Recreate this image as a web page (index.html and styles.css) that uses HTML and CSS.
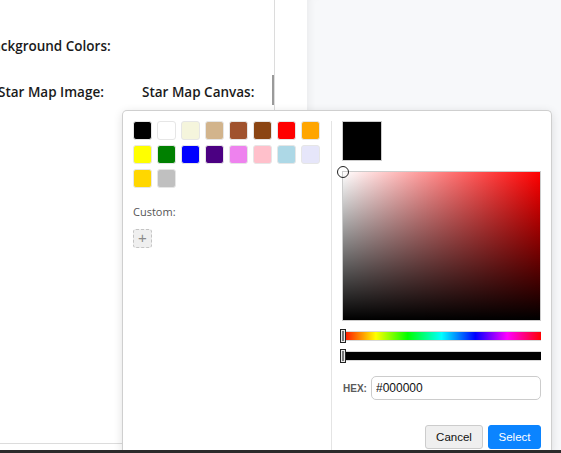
FILE: index.html
```html
<!DOCTYPE html>
<html>
<head>
<meta charset="utf-8">
<link rel="stylesheet" href="styles.css">
</head>
<body>
<div class="app">
  <div class="panel">
    <div class="panel-inner">
      <div class="label heading">Background Colors:</div>
      <div class="label-row">
        <div class="label">Star Map Image:</div>
        <div class="label">Star Map Canvas:</div>
      </div>
    </div>
    <div class="scroll-thumb"></div>
  </div>
  <div class="gutter"></div>
  <div class="canvas-area"></div>
</div>
<div class="taskbar"></div>

<div class="picker">
  <div class="palette">
    <div class="swatches">
      <span class="sw" style="background:#000000"></span>
      <span class="sw" style="background:#ffffff"></span>
      <span class="sw" style="background:#f5f5dc"></span>
      <span class="sw" style="background:#d2b48c"></span>
      <span class="sw" style="background:#a0522d"></span>
      <span class="sw" style="background:#8b4513"></span>
      <span class="sw" style="background:#ff0000"></span>
      <span class="sw" style="background:#ffa500"></span>
      <span class="sw" style="background:#ffff00"></span>
      <span class="sw" style="background:#008000"></span>
      <span class="sw" style="background:#0000ff"></span>
      <span class="sw" style="background:#4b0082"></span>
      <span class="sw" style="background:#ee82ee"></span>
      <span class="sw" style="background:#ffc0cb"></span>
      <span class="sw" style="background:#add8e6"></span>
      <span class="sw" style="background:#e6e6fa"></span>
      <span class="sw" style="background:#ffd700"></span>
      <span class="sw" style="background:#c0c0c0"></span>
    </div>
    <div class="custom-label">Custom:</div>
    <div class="add-btn">+</div>
  </div>
  <div class="editor">
    <div class="preview"></div>
    <div class="sat">
      <div class="sat-handle"></div>
    </div>
    <div class="bar hue"><div class="bar-handle"></div></div>
    <div class="bar alpha"><div class="bar-handle"></div></div>
    <div class="hex-row">
      <label class="hex-label">HEX:</label>
      <input class="hex-input" type="text" value="#000000">
    </div>
    <div class="actions">
      <button class="btn cancel">Cancel</button>
      <button class="btn select">Select</button>
    </div>
  </div>
</div>
</body>
</html>
```
FILE: styles.css
```css
html, body {
  margin: 0;
  padding: 0;
  height: 453px;
  overflow: hidden;
  background: #ffffff;
  font-family: "Open Sans", "Liberation Sans", sans-serif;
}

.app {
  display: flex;
  height: 450px;
}

.panel {
  position: relative;
  width: 274px;
  height: 443px;
  border-right: 1px solid #dcdcdc;
  border-bottom: 1px solid #dcdcdc;
  overflow: hidden;
  flex-shrink: 0;
}

.panel-inner {
  padding-top: 36px;
}

.label {
  font-size: 13.5px;
  font-weight: 600;
  line-height: 20px;
  color: #1a1a1a;
  white-space: nowrap;
}

.heading {
  margin-left: -16px;
}

.label-row {
  display: grid;
  grid-template-columns: 144px 1fr;
  margin-left: -2px;
  margin-top: 25.5px;
}

.scroll-thumb {
  position: absolute;
  right: 0;
  top: 75px;
  width: 2px;
  height: 30px;
  background: #9a9a9a;
}

.gutter {
  width: 32px;
  flex-shrink: 0;
}

.canvas-area {
  flex: 1;
  background: #f7f8fa;
  box-shadow: inset 8px 0 8px -6px rgba(0, 0, 0, 0.06);
}

.taskbar {
  position: relative;
  z-index: 5;
  height: 3px;
  background: #2b2b2b;
}

/* picker popup */
.picker {
  position: absolute;
  left: 122px;
  top: 110px;
  width: 430px;
  height: 343px;
  box-sizing: border-box;
  padding: 10px 10px 0 10px;
  display: flex;
  background: #ffffff;
  border: 1px solid #cfcfcf;
  border-bottom: none;
  border-radius: 5px 5px 0 0;
  box-shadow: 0 2px 10px rgba(0, 0, 0, 0.12);
  z-index: 2;
}

.palette {
  width: 188px;
  padding-right: 10px;
  border-right: 1px solid #e4e4e4;
  flex-shrink: 0;
}

.swatches {
  display: grid;
  grid-template-columns: repeat(8, 19px);
  grid-auto-rows: 19px;
  gap: 5px;
}

.sw {
  display: block;
  box-sizing: border-box;
  border: 1px solid #e6e6e6;
  border-radius: 3px;
}

.custom-label {
  margin-top: 16px;
  font-size: 11px;
  line-height: 15px;
  color: #555;
}

.add-btn {
  margin-top: 10px;
  width: 19px;
  height: 19px;
  box-sizing: border-box;
  border: 1px dashed #c4c4c4;
  border-radius: 3px;
  background: #efefef;
  color: #8a8a8a;
  font-family: "Liberation Sans", sans-serif;
  font-size: 15px;
  line-height: 16px;
  text-align: center;
}

.editor {
  width: 199px;
  padding-left: 10px;
  flex-shrink: 0;
}

.preview {
  width: 40px;
  height: 40px;
  box-sizing: border-box;
  border: 1px solid #cccccc;
  background: #000000;
}

.sat {
  position: relative;
  margin-top: 10px;
  height: 150px;
  box-sizing: border-box;
  border: 1px solid #cccccc;
  background:
    linear-gradient(to top, #000000, rgba(0, 0, 0, 0)),
    linear-gradient(to right, #ffffff, #ff0000);
}

.sat-handle {
  position: absolute;
  left: -6px;
  top: -6px;
  width: 12px;
  height: 12px;
  box-sizing: border-box;
  border: 1.5px solid #222;
  border-radius: 50%;
}

.bar {
  position: relative;
  margin-top: 10px;
  height: 10px;
  box-sizing: border-box;
  border-top: 1px solid #d8d8d8;
  border-bottom: 1px solid #d8d8d8;
}

.hue {
  background: linear-gradient(to right, #ff0000 0%, #ffff00 17%, #00ff00 33%, #00ffff 50%, #0000ff 67%, #ff00ff 83%, #ff0000 100%);
}

.alpha {
  background: #000000;
}

.bar-handle {
  position: absolute;
  left: -2px;
  top: -3px;
  width: 6px;
  height: 14px;
  box-sizing: border-box;
  border: 1px solid #222;
  background: #777;
  box-shadow: inset 0 0 0 1px #e8e8e8;
}

.hex-row {
  display: flex;
  align-items: center;
  margin-top: 15px;
}

.hex-label {
  width: 28px;
  padding-left: 1px;
  font-family: "Liberation Sans", sans-serif;
  font-size: 10px;
  font-weight: bold;
  color: #5a5a5a;
}

.hex-input {
  width: 170px;
  height: 24px;
  box-sizing: border-box;
  margin: 0;
  padding: 0 4px;
  border: 1px solid #cccccc;
  border-radius: 5px;
  font-family: "Liberation Sans", sans-serif;
  font-size: 12px;
  color: #111;
  outline: none;
}

.actions {
  display: flex;
  justify-content: flex-end;
  gap: 5px;
  margin-top: 25px;
}

.btn {
  height: 24px;
  box-sizing: border-box;
  margin: 0;
  padding: 0;
  border-radius: 3px;
  font-family: "Liberation Sans", sans-serif;
  font-size: 11.5px;
}

.cancel {
  width: 58px;
  border: 1px solid #cccccc;
  background: #efefef;
  color: #111;
}

.select {
  width: 53px;
  border: 1px solid #0b84ff;
  background: #0b84ff;
  color: #ffffff;
}
```
